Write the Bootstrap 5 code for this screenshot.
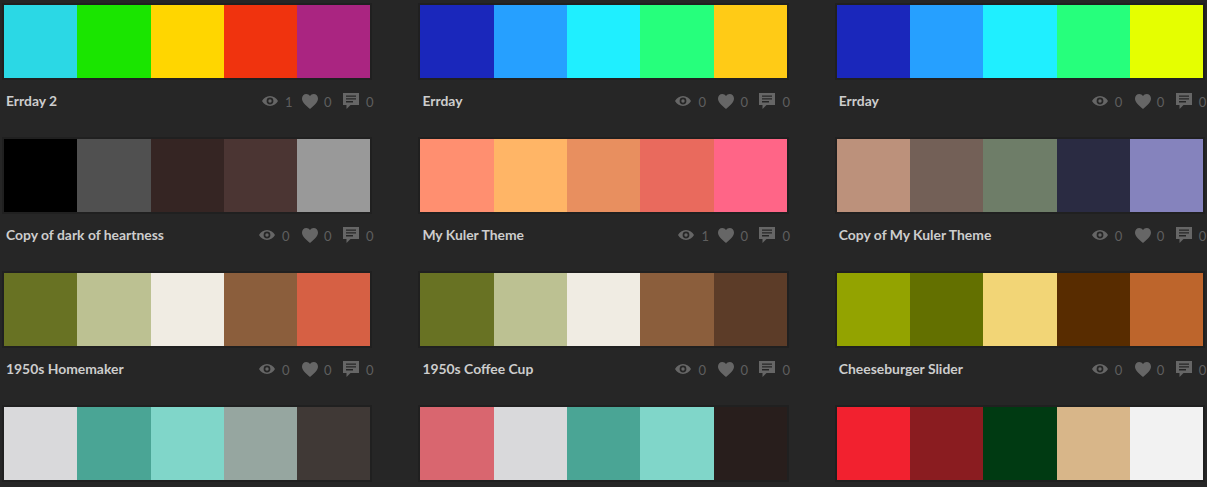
<!DOCTYPE html>
<html lang="en">
<head>
  <meta charset="UTF-8">
  <title>Color themes</title>
  <meta name="viewport" content="width=device-width, initial-scale=1">
  <link href="https://cdn.jsdelivr.net/npm/bootstrap@5.3.0/dist/css/bootstrap.min.css" rel="stylesheet">
  <style>
    body {
      background-color: #262626;
      font-family: "Lato", "Open Sans", sans-serif;
    }
    .theme-grid {
      display: grid;
      grid-template-columns: repeat(3, 366.4px);
      column-gap: 50px;
      padding: 5px 0 7px 4px;
    }
    .swatches {
      height: 73px;
      outline: 2px solid #202020;
    }
    .swatch {
      flex: 1 1 0;
    }
    .theme-meta {
      height: 46px;
      margin-bottom: 15px;
      margin-right: -3.6px;
      padding-left: 2px;
    }
    .theme-name {
      color: #cdcdcd;
      font-size: 13.9px;
      font-weight: 700;
      line-height: 20px;
    }
    .theme-stats {
      color: #5f5f5f;
      font-size: 13px;
      line-height: 20px;
    }
    .stat-num {
      width: 7px;
      padding-top: 1px;
      text-align: center;
    }
    .stat-num.narrow {
      width: 4px;
    }
    .stat-num:last-child {
      margin-left: -1px;
      margin-right: 1px;
    }
    .stat-eye {
      margin-right: 7px;
    }
    .stat-heart {
      margin-left: 13px;
      margin-right: 6px;
    }
    .stat-bubble {
      margin-left: 12px;
      margin-right: 8px;
    }
    .stat-icon {
      fill: #666666;
      display: block;
    }
  </style>
</head>
<body>
  <svg width="0" height="0" class="d-block">
    <symbol id="ico-eye" viewBox="0 0 16 12">
      <path fill-rule="evenodd" d="M8 1C4.4 1 1.6 3.4 0 6c1.600 2.600 4.400 5 8 5s6.400-2.400 8-5c-1.600-2.600-4.400-5-8-5zm0 1.600a3.400 3.400 0 1 1 0 6.800 3.400 3.400 0 0 1 0-6.800zM8 4.300a1.700 1.700 0 1 0 0 3.400 1.700 1.700 0 0 0 0-3.400z"/>
    </symbol>
    <symbol id="ico-heart" viewBox="0 0 16 15">
      <path d="M8 15C3 10.800 0 8 0 4.500 0 1.900 1.900 0 4.300 0 5.800 0 7.200.8 8 2.100 8.800.8 10.200 0 11.700 0 14.100 0 16 1.900 16 4.500 16 8 13 10.800 8 15z"/>
    </symbol>
    <symbol id="ico-bubble" viewBox="0 0 16 16">
      <path fill-rule="evenodd" d="M0 0h16v12H7.500L3.500 16v-4H0zM3 2.500v1.300h10V2.500zM3 5.300v1.300h10V5.300zM3 8.100v1.300h7V8.100z"/>
    </symbol>
  </svg>

  <div class="theme-grid" id="themes"></div>

  <script>
    const themes = [
      ["Errday 2", 1, ["#2bd8e5", "#1ae500", "#ffd600", "#f0330e", "#aa2581"]],
      ["Errday", 0, ["#1a27bb", "#26a0ff", "#1fefff", "#26ff7c", "#ffcb16"]],
      ["Errday", 0, ["#1a27bb", "#26a0ff", "#1fefff", "#26ff7c", "#e5ff00"]],
      ["Copy of dark of heartness", 0, ["#000000", "#505050", "#352523", "#4b3533", "#999999"]],
      ["My Kuler Theme", 1, ["#ff8f70", "#ffb566", "#e88f5f", "#e96a5d", "#ff6587"]],
      ["Copy of My Kuler Theme", 0, ["#bc917b", "#736057", "#6e7d68", "#2a2b42", "#8583bd"]],
      ["1950s Homemaker", 0, ["#687223", "#bcc192", "#f0ece3", "#8b5e3c", "#d66044"]],
      ["1950s Coffee Cup", 0, ["#687223", "#bcc192", "#f0ece3", "#8b5e3c", "#5c3c28"]],
      ["Cheeseburger Slider", 0, ["#93a300", "#637000", "#f2d576", "#582c00", "#bd652c"]],
      ["", 0, ["#d9d9db", "#4aa595", "#80d6c9", "#96a6a0", "#403936"]],
      ["", 0, ["#d9666f", "#d9d9db", "#4aa595", "#80d6c9", "#281e1c"]],
      ["", 0, ["#f2212f", "#8a1c20", "#003a12", "#d8b689", "#f2f2f2"]]
    ];

    function icon(name, w, h) {
      return `<svg class="stat-icon stat-${name}" width="${w}" height="${h}"><use href="#ico-${name}"/></svg>`;
    }

    function num(n) {
      return `<span class="stat-num${n === 1 ? " narrow" : ""}">${n}</span>`;
    }

    document.getElementById("themes").innerHTML = themes.map(t => {
      const cells = t[2].map(c => `<div class="swatch" style="background-color:${c}"></div>`).join("");
      const meta = t[0] ? `
        <div class="theme-meta d-flex align-items-center justify-content-between">
          <span class="theme-name">${t[0]}</span>
          <div class="theme-stats d-flex align-items-center">
            ${icon("eye", 16, 12)}${num(t[1])}${icon("heart", 16, 15)}${num(0)}${icon("bubble", 16, 16)}${num(0)}
          </div>
        </div>` : "";
      return `<div><div class="swatches d-flex">${cells}</div>${meta}</div>`;
    }).join("");
  </script>
  <script src="https://cdn.jsdelivr.net/npm/bootstrap@5.3.0/dist/js/bootstrap.bundle.min.js"></script>
</body>
</html>
